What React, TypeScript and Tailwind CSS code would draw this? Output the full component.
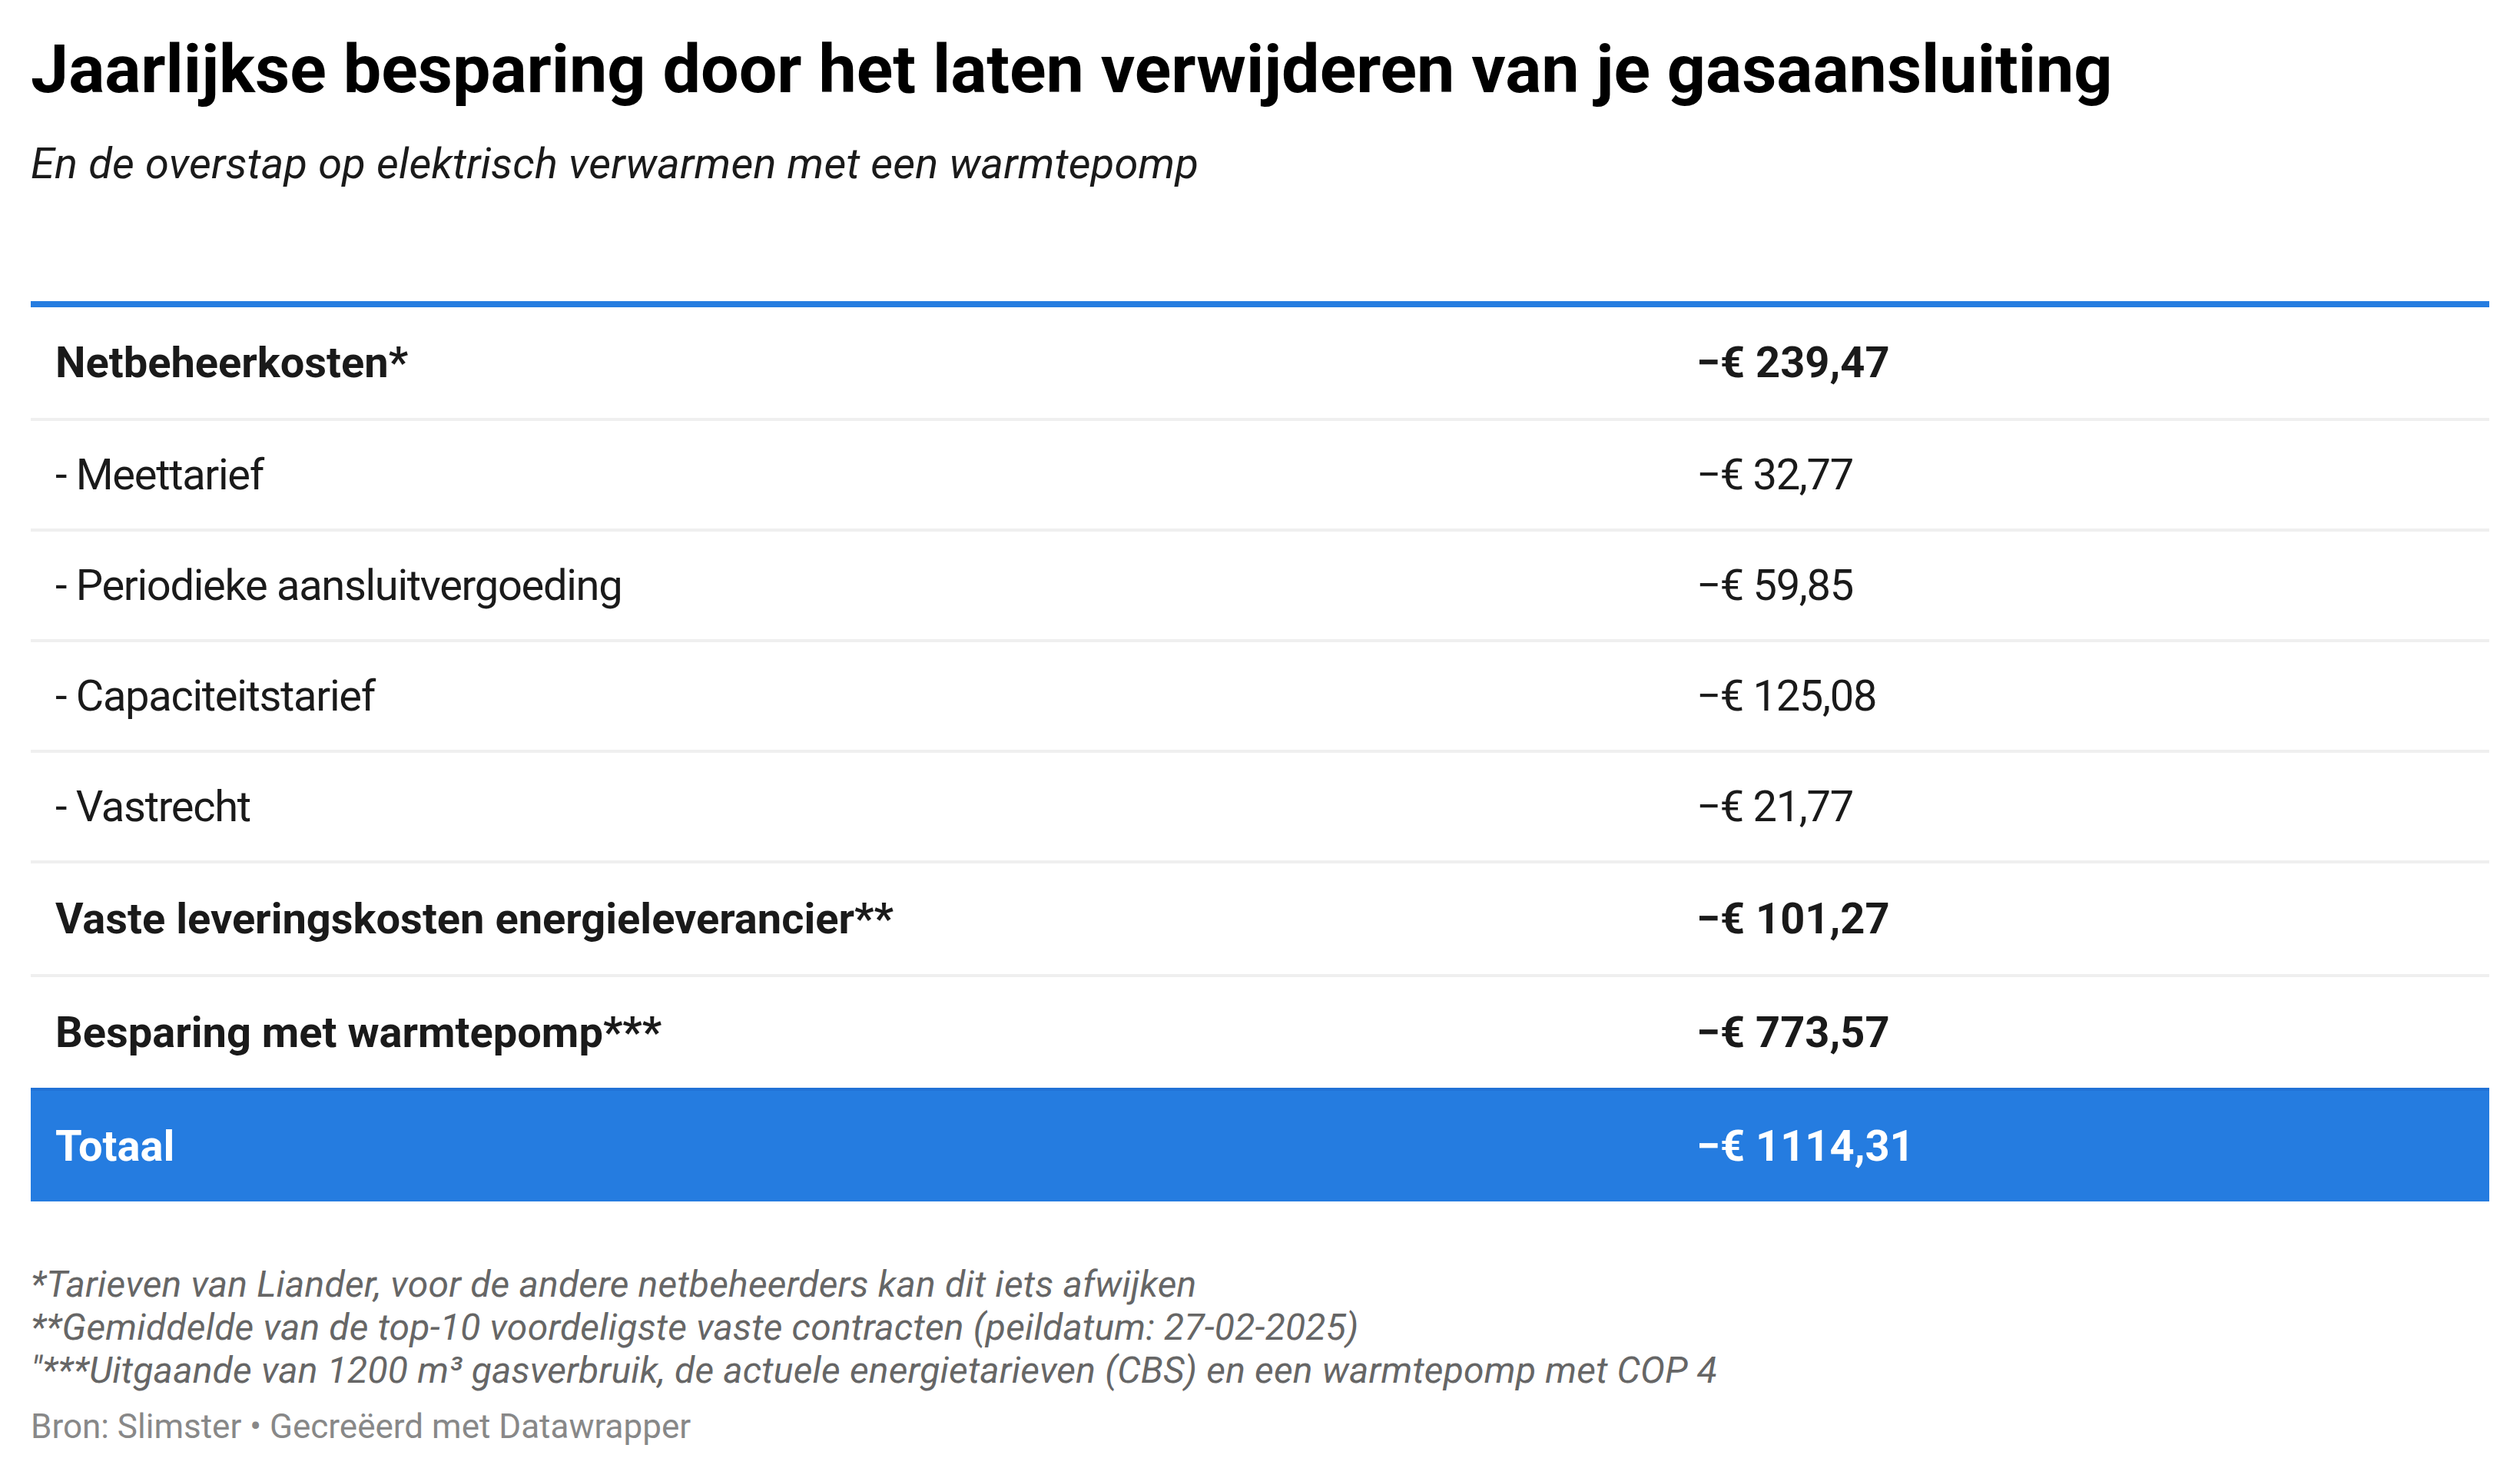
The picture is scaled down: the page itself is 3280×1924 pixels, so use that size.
import React from "react";

type Row = { label: string; value: string; bold?: boolean; noBorder?: boolean };

const rows: Row[] = [
  { label: "Netbeheerkosten*", value: "\u2212\u20ac 239,47", bold: true },
  { label: "- Meettarief", value: "\u2212\u20ac 32,77" },
  { label: "- Periodieke aansluitvergoeding", value: "\u2212\u20ac 59,85" },
  { label: "- Capaciteitstarief", value: "\u2212\u20ac 125,08" },
  { label: "- Vastrecht", value: "\u2212\u20ac 21,77" },
  { label: "Vaste leveringskosten energieleverancier**", value: "\u2212\u20ac 101,27", bold: true },
  { label: "Besparing met warmtepomp***", value: "\u2212\u20ac 773,57", bold: true, noBorder: true },
];

export default function App() {
  return (
    <div className="min-h-[1924px] w-[3280px] bg-white px-[40px] pt-[37px] font-['Roboto','Liberation_Sans',sans-serif]">
      <h1 className="text-[88px] font-bold leading-[106px] text-black">
        Jaarlijkse besparing door het laten verwijderen van je gasaansluiting
      </h1>
      <p className="mt-[31px] text-[56px] italic leading-[78px] tracking-[0.2px] text-[#1a1a1a]">
        En de overstap op elektrisch verwarmen met een warmtepomp
      </p>

      <div className="mt-[140px] border-t-[8px] border-[#257ce0]">
        {rows.map((r, i) => (
          <div
            key={i}
            className={[
              "grid grid-cols-[2136px_1fr] text-[56px] leading-[64px] text-[#1a1a1a]",
              r.noBorder ? "" : "border-b-[4px] border-[#efefef]",
              r.bold ? "py-[40px] font-bold" : "py-[38px] tracking-[-1.3px]",
            ].join(" ")}
          >
            <div className="pl-[32px]">{r.label}</div>
            <div className="pl-[32px]">{r.value}</div>
          </div>
        ))}
        <div className="grid grid-cols-[2136px_1fr] border-t-[4px] border-[#2172d6] bg-[#257ce0] py-[40px] text-[56px] font-bold leading-[64px] text-white">
          <div className="pl-[32px]">Totaal</div>
          <div className="pl-[32px]">{"\u2212\u20ac 1114,31"}</div>
        </div>
      </div>

      <div className="mt-[80px] text-[48px] italic leading-[56px] tracking-[0.2px] text-[#666666]">
        <p>*Tarieven van Liander, voor de andere netbeheerders kan dit iets afwijken</p>
        <p>**Gemiddelde van de top-10 voordeligste vaste contracten (peildatum: 27-02-2025)</p>
        <p>"***Uitgaande van 1200 m³ gasverbruik, de actuele energietarieven (CBS) en een warmtepomp met COP 4</p>
      </div>
      <p className="mt-[19px] text-[44px] leading-[52px] text-[#888888]">
        Bron: Slimster • Gecreëerd met Datawrapper
      </p>
    </div>
  );
}
